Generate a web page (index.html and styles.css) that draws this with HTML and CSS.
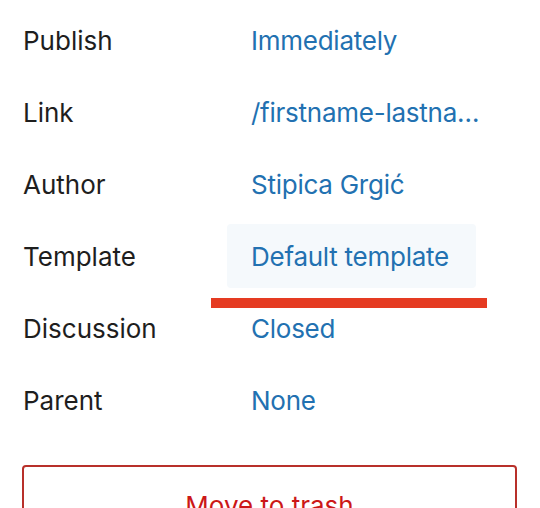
FILE: index.html
```html
<!DOCTYPE html>
<html lang="en">
<head>
<meta charset="utf-8">
<title>Post summary</title>
<link rel="stylesheet" href="styles.css">
</head>
<body>
<div class="panel">
  <div class="rows">
    <div class="row"><span class="label">Publish</span><span class="value">Immediately</span></div>
    <div class="row"><span class="label">Link</span><span class="value">/firstname-lastna…</span></div>
    <div class="row"><span class="label">Author</span><span class="value">Stipica Grgić</span></div>
    <div class="row row-marked"><span class="label">Template</span><span class="value value-hover">Default template</span><span class="marker"></span></div>
    <div class="row"><span class="label">Discussion</span><span class="value">Closed</span></div>
    <div class="row"><span class="label">Parent</span><span class="value">None</span></div>
  </div>
  <button class="trash">Move to trash</button>
</div>
</body>
</html>
```

FILE: styles.css
```css
html, body {
  margin: 0;
  padding: 0;
  background: #ffffff;
}
body {
  font-family: Inter, "Noto Sans", sans-serif;
  font-size: 26px;
  color: #1e1e1e;
}
.panel {
  padding: 8px 23px 0 22px;
}
.rows {
  display: flex;
  flex-direction: column;
  gap: 8px;
}
.row {
  position: relative;
  display: flex;
  align-items: center;
  height: 64px;
}
.label {
  width: 205px;
  flex: none;
  padding-left: 1px;
  box-sizing: border-box;
}
.value {
  display: flex;
  align-items: center;
  height: 64px;
  padding: 0 24px;
  color: #2271b1;
  border-radius: 4px;
  white-space: nowrap;
  letter-spacing: -0.25px;
}
.value-hover {
  background: #f5f9fc;
  padding-right: 27px;
}
.marker {
  position: absolute;
  left: 189px;
  top: 74px;
  width: 276px;
  height: 10px;
  background: #e53b22;
}
.trash {
  display: block;
  box-sizing: border-box;
  width: 100%;
  height: 80px;
  margin-top: 33px;
  border: 2px solid #b8302a;
  border-radius: 4px;
  background: #ffffff;
  color: #cc1818;
  font-family: inherit;
  font-size: 26px;
}
```
